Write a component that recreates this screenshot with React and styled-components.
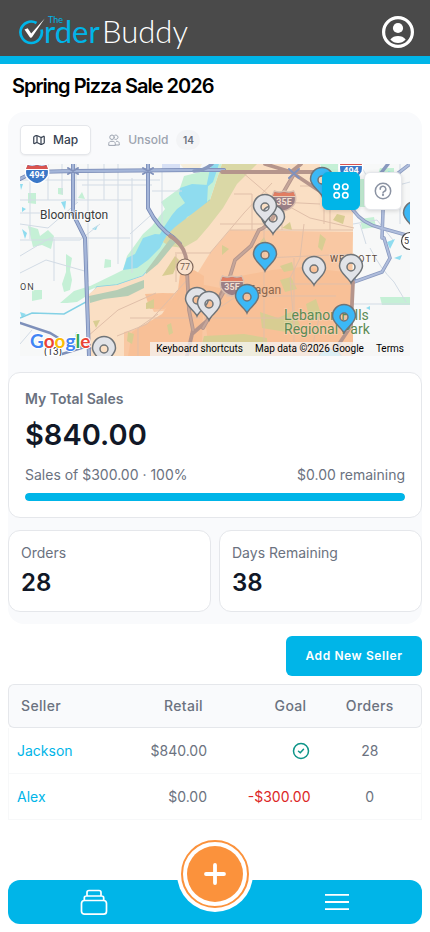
import React from "react";
import styled, { createGlobalStyle } from "styled-components";

const sellers = [
  { name: "Jackson", retail: "$840.00", goal: null, orders: 28 },
  { name: "Alex", retail: "$0.00", goal: "-$300.00", orders: 0 },
];

const pins = [
  { x: 395, y: 50, sold: true },
  { x: 302, y: 16, sold: true },
  { x: 253, y: 54 },
  { x: 245, y: 43 },
  { x: 245, y: 91, sold: true },
  { x: 294, y: 105 },
  { x: 331, y: 103 },
  { x: 177, y: 136 },
  { x: 189, y: 140 },
  { x: 227, y: 133, sold: true },
  { x: 324, y: 153, sold: true },
  { x: 84, y: 185 },
];

const App = () => {
  return (
    <>
      <GlobalStyle />
      <Page>
        <Header>
          <Logo />
          <ProfileButton type="button" aria-label="Profile">
            <ProfileIcon />
          </ProfileButton>
        </Header>
        <Main>
          <Title>Spring Pizza Sale 2026</Title>
          <Panel>
            <MapSection>
              <Tabs>
                <Tab type="button" $active>
                  <MapIcon />
                  Map
                </Tab>
                <Tab type="button">
                  <GroupIcon />
                  Unsold
                  <Badge>14</Badge>
                </Tab>
              </Tabs>
              <MapBox>
                <MapDrawing />
                <MapTools>
                  <ToolButton type="button" $primary aria-label="Layers">
                    <GridIcon />
                  </ToolButton>
                  <ToolButton type="button" aria-label="Help">
                    <HelpIcon />
                  </ToolButton>
                </MapTools>
                <MapFooter>
                  <MapCredit as="button" type="button">
                    Keyboard shortcuts
                  </MapCredit>
                  <MapCredit>Map data ©2026 Google</MapCredit>
                  <MapCredit as="a" href="#terms">
                    Terms
                  </MapCredit>
                </MapFooter>
              </MapBox>
            </MapSection>
            <SalesCard>
              <SalesLabel>My Total Sales</SalesLabel>
              <SalesTotal>$840.00</SalesTotal>
              <SalesRow>
                <span>Sales of $300.00 · 100%</span>
                <span>$0.00 remaining</span>
              </SalesRow>
              <Progress>
                <ProgressFill style={{ width: "100%" }} />
              </Progress>
            </SalesCard>
            <Stats>
              <Stat>
                <StatLabel>Orders</StatLabel>
                <StatValue>28</StatValue>
              </Stat>
              <Stat>
                <StatLabel>Days Remaining</StatLabel>
                <StatValue>38</StatValue>
              </Stat>
            </Stats>
          </Panel>
          <Actions>
            <AddButton type="button">Add New Seller</AddButton>
          </Actions>
          <Table>
            <thead>
              <tr>
                <Th>Seller</Th>
                <Th $align="right">Retail</Th>
                <Th $align="right">Goal</Th>
                <Th $align="center">Orders</Th>
              </tr>
            </thead>
            <tbody>
              {sellers.map((seller) => (
                <tr key={seller.name}>
                  <Td>
                    <SellerLink href="#seller">{seller.name}</SellerLink>
                  </Td>
                  <Td $align="right">{seller.retail}</Td>
                  <Td $align="right" $negative={!!seller.goal}>
                    {seller.goal || <DoneIcon />}
                  </Td>
                  <Td $align="center">{seller.orders}</Td>
                </tr>
              ))}
            </tbody>
          </Table>
        </Main>
        <BottomNav>
          <NavButton type="button" aria-label="Sales">
            <StackIcon />
          </NavButton>
          <AddSlot>
            <Fab type="button" aria-label="New order">
              <FabCore>
                <PlusIcon />
              </FabCore>
            </Fab>
          </AddSlot>
          <NavButton type="button" aria-label="Menu">
            <MenuIcon />
          </NavButton>
        </BottomNav>
      </Page>
    </>
  );
};

export default App;

const Logo = () => (
  <svg width="176" height="44" viewBox="0 0 176 44" role="img" aria-label="The Order Buddy">
    <path d="M18.500 17A10.700 10.700 0 1 0 23.500 23.500" fill="none" stroke="#00b5e8" strokeWidth="2.700" />
    <path d="M6.500 23.500l3.200-1.300 3.500 5.300L26.700 12.500 13.800 31.500l-1.600.2z" fill="#fff" />
    <g fontFamily="Lato, sans-serif">
      <text x="30" y="17" fontSize="9" fill="#00b5e8">
        The
      </text>
      <text x="26" y="37" fontSize="31" fill="#00b5e8">
        rder
      </text>
      <text x="84" y="37" fontSize="31" fontWeight="300" fill="#fff">
        Buddy
      </text>
    </g>
  </svg>
);

const ProfileIcon = () => (
  <svg width="32" height="32" viewBox="0 0 32 32">
    <circle cx="16" cy="16" r="14.400" fill="none" stroke="#fff" strokeWidth="3.200" />
    <circle cx="16" cy="12" r="5.100" fill="#fff" />
    <path d="M8.300 23.500C10 21 13 20 16 20s6 1 7.700 3.500C21.500 26 19 27 16 27s-5.500-1-7.700-3.500z" fill="#fff" />
  </svg>
);

const MapIcon = () => (
  <svg width="12" height="12" viewBox="0 0 24 24" fill="none" stroke="currentColor" strokeWidth="2.400" strokeLinejoin="round">
    <path d="M1.500 6.500Q1.500 5 3 4.400L6 3.200Q7.500 2.600 9 3.500l6 3Q16.500 7 18 6.300l2.500-1.500Q22.500 4 22.500 6v11q0 1.500-1.500 2l-3 1.500q-1.500.7-3 0l-6-3q-1.500-.7-3 0L3.500 19Q1.500 19.800 1.500 18z" />
    <path d="M8 3.500v14M16 7v13.500" />
  </svg>
);

const GroupIcon = () => (
  <svg width="12" height="12" viewBox="0 0 24 24" fill="none" stroke="currentColor" strokeWidth="2" strokeLinecap="round">
    <circle cx="8" cy="6.500" r="4.500" />
    <path d="M13.500 2.500a4.500 4.500 0 1 1 0 8" />
    <path d="M1.500 22v-3c0-3 2.500-4.500 6.500-4.500s6.500 1.500 6.500 4.500v3zM17 14.500c3.500 0 5.500 1.500 5.500 4.500v3H15" />
  </svg>
);

const GridIcon = () => (
  <svg width="16" height="16" viewBox="0 0 16 16" fill="none" stroke="currentColor" strokeWidth="1.600">
    <circle cx="3.700" cy="3.700" r="2.700" />
    <circle cx="12.300" cy="3.700" r="2.700" />
    <circle cx="3.700" cy="12.300" r="2.700" />
    <circle cx="12.300" cy="12.300" r="2.700" />
  </svg>
);

const HelpIcon = () => (
  <svg width="18" height="18" viewBox="0 0 18 18" fill="none" stroke="currentColor" strokeWidth="1.500" strokeLinecap="round">
    <circle cx="9" cy="9" r="7.700" />
    <path d="M6.200 7.300A2.800 2.800 0 1 1 9.800 9.700C9.200 9.900 9 10.200 9 11" />
    <circle cx="9" cy="13" r=".4" />
  </svg>
);

const DoneIcon = () => (
  <DoneSvg width="20" height="20" viewBox="0 0 20 20" role="img" aria-label="Goal met">
    <circle cx="10" cy="10" r="7.500" />
    <path d="M7.500 10.200l1.800 1.600 3.200-3.500" />
  </DoneSvg>
);

const StackIcon = () => (
  <svg width="28" height="28" viewBox="0 0 28 28" fill="none" stroke="currentColor" strokeWidth="1.700" strokeLinejoin="round">
    <rect x="1.500" y="12.500" width="25" height="13.700" rx="3" />
    <path d="M4.300 12.500V10q0-2 2-2h15.400q2 0 2 2v2.500M7 8V4.500q0-2 2-2h10q2 0 2 2V8" />
  </svg>
);

const MenuIcon = () => (
  <svg width="24" height="18" viewBox="0 0 24 18" stroke="currentColor" strokeWidth="1.800">
    <path d="M0 1.800h24M0 9h24M0 16.200h24" />
  </svg>
);

const PlusIcon = () => (
  <svg width="22" height="22" viewBox="0 0 22 22" stroke="#fff" strokeWidth="3.800" strokeLinecap="round">
    <path d="M2 11h18M11 2v18" />
  </svg>
);

const Pin = ({ x, y, sold }) => (
  <g transform={`translate(${x} ${y})`}>
    <path
      d="M0 16C-2 11-11.500 6-11.500-1A11.500 11.500 0 0 1 11.500-1C11.500 6 2 11 0 16zM0-4a4 4 0 1 0 0 8a4 4 0 1 0 0-8z"
      fill={sold ? "#3bb8f6" : "#e1e3e8"}
      fillRule="evenodd"
      stroke="#6f7478"
      strokeWidth="1.500"
    />
  </g>
);

const Shield = ({ x, y, label, faded }) => (
  <g transform={`translate(${x} ${y})`}>
    <path
      d="M-9.500-9Q-5-7 0-9Q5-7 9.500-9Q13-3 11 3Q8 9 0 11Q-8 9-11 3Q-13-3-9.500-9z"
      fill={faded ? "#9a7f86" : "#3b78c8"}
      stroke={faded ? "#d9bfae" : "#fff"}
      strokeWidth="1.500"
    />
    <path d="M-9.500-8Q-5-6 0-8Q5-6 9.500-8L11-4H-11z" fill={faded ? "#e17d62" : "#d9534f"} />
    <path d="M-11.500-3.500h23" stroke={faded ? "#e8cfbd" : "#fff"} />
    <text y="5" textAnchor="middle" fontSize="9" fontWeight="700" fill={faded ? "#f3ded0" : "#fff"}>
      {label}
    </text>
  </g>
);

const MapDrawing = () => (
  <MapSvg viewBox="0 0 390 192" preserveAspectRatio="xMidYMid slice" role="img" aria-label="Sales map">
    <rect width="390" height="192" fill="#f7f8f8" />
    {/* parks */}
    <g fill="#c5f0d6">
      <path d="M180 8l20-8 2 0-12 36-25 27-8 8-14 17-20 23-26 10-20 2-17 7 2-4 33-16 8-4 4-14 16-22 9-8 13-17-4-7 19-14 4-12z" />
      <path d="M40 139l14-12 16-5-2 9-11 7-10 1zM46 90l6 4-2 12 2 10-2 10-6 2-2-8 4-12zM8 62l10 3 2 7 8-6 6 6-3 13-9-4-9 2zM85 95l6 1v7l-7 1zM12 126h10v9l-10 2zM8 29h8v11l-8-1zM38 24h5v7l-5-1zM58 34l4-6 3 7zM300 0h18v12h-14zM334 15h18v28h-12zM360 4h14v12h-18zM340 55l14-2 2 10-14 2zM360 133h30v8h-28z" />
    </g>
    <path d="M142 0h18v5h-18z" fill="#d7e0f5" />
    <path d="M160 0h22l-4 8-14-3z" fill="#f6eedb" />
    {/* water */}
    <g fill="#8fdcef">
      <path d="M160 24l12-4 16 1-1 18-7 8-13 6-4 10-15 12-12 2 8-14 8-12 5-6 8-6-6-9z" />
      <path d="M103 106l4-12 8-4 8-16 12-4 12 1-7 13-12 12-11 8z" />
      <path d="M191 0h8l-6 18-7 6zM41 38l5-1-1 9zM0 20h3l-2 6zM2 43l4 2-4 3zM72 65l6-4-2 5zM2 65l5 4-2 6zM368 7l12 4-8 5zM367 78l8-3-5 10zM374 94l8-3-2 5zM350 30l5 8-7 2zM346 144l4-2v4zM56 168l3 3-4 2zM0 148l6 2-4 4z" />
    </g>
    <path d="M0 154l12-5 32 1 22-12 11-15 20-2 26-9 20-23 22-26 25-27" fill="none" stroke="#83d1e5" strokeWidth="1.500" />
    {/* local streets */}
    <g fill="none" stroke="#d2dbe5" strokeWidth="1">
      <path d="M0 16h140M0 36h112M0 49h20M62 21h70M10 0v75M28 0v36M68 0v118M98 0v100M84 0v36M112 14v95M34 75v42M0 92l30-18h80M0 109l26-13 42 12M132 27h30M142 4v58M0 60l28 4 30-26M42 0v30M56 0v40M110 70l20-18M0 76h60l20-16" />
      <path d="M333 60l24-4 16 20M333 140h57M350 84q10 20 24 34l12 20M340 0l10 18M360 26l30-8M380 0v60M340 60l6 20M0 180l12-14" />
    </g>
    {/* territory */}
    <path d="M202 0h98v8h33v184H68v-61l9-8 20-2 26-9 20-23 14-17 8-8 25-27z" fill="#fadfc4" />
    <path d="M333 68l-123-2-20 23-13 21-20 19-7 0-16 1-4 10 4 8 16-2-10 9-27 11-9 2v28h225z" fill="#f9c8a3" />
    <path d="M125 130l18-1 11 1-6 12-4 3-14 0zM160 110l14-4 10 6-2 70-24 10h-50l4-24 30-18 16-24zM180 120l20 4 20-12 32-6 30-3 51 6v83H190z" fill="#f8c097" />
    <path d="M190 36L202 0h35l-20 20-14 24-14 18-12 14-14 8-14-2-6-4 4-7 8-8z" fill="#dad8a6" />
    <g fill="#d8cd92">
      <path d="M126 139l8-4v9l-8 1zM73 157l7-1-4 8zM147 161l4-2 2 10-4 2zM262 64l8-6 2 8zM240 78l4-5 4 9-5 3zM260 116l11-3 6 12-12 3zM240 148l18 6 15-7 7 14-14 7-24-4zM184 172l40-2 23 4v18h-68zM286 140l10-5 6 18-12 4zM317 50l8 2-2 8-10-4zM142 112l13-20 4 4-6 14zM202 81l7 4-7 6zM260 102l12-4 2 8-10 2zM300 70l6 5-4 12-4-4zM108 168l6 2-2 10-5-3z" />
    </g>
    <path d="M69 132l28-6 27-10v8l-16 8-24 3-14 4zM126 107l24-32 6 3-18 22-12 10z" fill="#b5cdb5" />
    {/* local streets inside the territory */}
    <g fill="none" stroke="#e0bfa9" strokeWidth="1">
      <path d="M68 172l30-26 38-17M97 172l30-12 20-22 20-22M110 154h70M157 89h34M244 60v132M210 66h123M190 89l34-40 28-30M270 120h63M274 94v98M222 8l28 24 40 22 44 10M284 60l-4 34-10 20 4 46M200 60h44M310 30v36M190 150l30-20M156 88v30M300 150l-10 42M214 30h18v36M262 40v26M280 22h24v38" />
      <path d="M118 192v-28l20-14M244 94l90-4M184 154h149M206 132h110M300 40l-40-2" />
    </g>
    {/* highways */}
    <g fill="none" strokeLinecap="round">
      <path d="M0 15l14-7 40-1 120-1h30M53 0v50l12 24 2 60 2 58M128 0v44q10 20 26 30l6 6" stroke="#7688b4" strokeWidth="4" />
      <path d="M0 15l14-7 40-1 120-1h30M53 0v50l12 24 2 60 2 58M128 0v44q10 20 26 30l6 6" stroke="#a4b5d8" strokeWidth="2.500" />
      <path d="M174 7q10 0 18-7M333 46q10 14 28 18l29 8M390 0l-26 20-2 54M364 74l6 20-8 14-28 10v-4M354 18l14-18" stroke="#8999bf" strokeWidth="3.500" />
      <path d="M333 46q10 14 28 18l29 8M390 0l-26 20-2 54M364 74l6 20-8 14-28 10" stroke="#afbddc" strokeWidth="2" />
      <path d="M202 8l100 0M274 10l30 20M245 0l26 8 10-8M274 10l-15 26q-4 24-20 30l-8 16-16 14-8 26-24 42M150 72q18 10 17 34l2 40 4 20-6 26M172 170l16-14 19-38M333 118l-2 44-20 30" stroke="#b5958c" strokeWidth="3.800" />
      <path d="M274 10l-15 26q-4 24-20 30l-8 16-16 14-8 26-24 42M167 112l2 34 4 20" stroke="#c5a69a" strokeWidth="2" />
      <path d="M48 4l10 6M48 10l10-6M123 4l10 6M123 10l10-6M269 5l10 9M269 14l10-9" stroke="#8091bb" strokeWidth="2" />
      <path d="M0 159l30 10 20 12 20 3M42 190l26-8" stroke="#7e90ba" strokeWidth="2.500" />
    </g>
    {/* places */}
    <g fontFamily="Roboto, sans-serif" stroke="#fff" strokeOpacity=".6" strokeWidth="2" paintOrder="stroke">
      <text x="20" y="55" fontSize="12" fill="#3c3c3c">
        Bloomington
      </text>
      <text x="0" y="126" fontSize="9" letterSpacing="1" fill="#444">
        ON
      </text>
      <text x="228" y="130" fontSize="12" fill="#8b674f" strokeOpacity="0">
        Eagan
      </text>
      <text x="310" y="98" fontSize="9" letterSpacing="1" fill="#59483d" strokeOpacity=".2">
        WESCOTT
      </text>
      <text fontSize="14" fill="#5c8b55" strokeOpacity=".2">
        <tspan x="264" y="156">
          Lebanon Hills
        </tspan>
        <tspan x="264" y="170">
          Regional Park
        </tspan>
      </text>
    </g>
    <g fontFamily="Roboto, sans-serif">
      <circle cx="165" cy="103" r="8" fill="#fae3ce" stroke="#7f685b" strokeWidth="1.200" />
      <text x="165" y="106" textAnchor="middle" fontSize="9" fill="#745d50">
        77
      </text>
      <circle cx="390" cy="77" r="8.500" fill="#fff" stroke="#444" strokeWidth="1.200" />
      <text x="384" y="80" fontSize="9" fill="#333">
        5
      </text>
      <rect x="24" y="181" width="18" height="14" rx="6" fill="#fff" />
      <text x="33" y="191" textAnchor="middle" fontSize="10" fill="#333">
        (13)
      </text>
      <Shield x={17} y={9} label="494" />
      <Shield x={331} y={5} label="494" />
      <Shield x={264} y={36} label="35E" faded />
      <Shield x={212} y={121} label="35E" faded />
    </g>
    {pins.map((pin) => (
      <Pin key={`${pin.x}-${pin.y}`} {...pin} />
    ))}
    <circle cx="310" cy="198" r="13" fill="#8fd6ee" stroke="#b99b8c" />
    <text x="10" y="184" fontFamily="Lato, sans-serif" fontSize="19" fontWeight="700" stroke="#fff" strokeWidth="2" paintOrder="stroke">
      <tspan fill="#4285f4">G</tspan>
      <tspan fill="#ea4335">o</tspan>
      <tspan fill="#fbbc05">o</tspan>
      <tspan fill="#4285f4">g</tspan>
      <tspan fill="#34a853">l</tspan>
      <tspan fill="#ea4335">e</tspan>
    </text>
  </MapSvg>
);

const GlobalStyle = createGlobalStyle`
  * {
    box-sizing: border-box;
  }
  body {
    margin: 0;
    background: #fff;
    color: #6b7280;
    font-family: Inter, sans-serif;
    font-size: 14px;
    line-height: 20px;
  }
  button {
    margin: 0;
    padding: 0;
    border: 0;
    background: none;
    color: inherit;
    font: inherit;
    cursor: pointer;
  }
  svg {
    display: block;
  }
`;

const Page = styled.div`
  display: flex;
  flex-direction: column;
  min-height: 100vh;
`;

const Header = styled.header`
  display: flex;
  align-items: center;
  justify-content: space-between;
  height: 64px;
  padding: 0 16px 0 18px;
  background: #4a4a4a;
  border-bottom: 8px solid #00b5e8;
`;

const ProfileButton = styled.button`
  margin-top: 8px;
`;

const Main = styled.main`
  padding: 8px 8px 0;
`;

const Title = styled.h1`
  margin: 0 4px 12px;
  color: #000;
  font-size: 20px;
  font-weight: 600;
  line-height: 28px;
  letter-spacing: -0.05em;
`;

const Panel = styled.section`
  display: flex;
  flex-direction: column;
  gap: 12px;
  padding-bottom: 12px;
  border-radius: 16px;
  background: #f9fafc;
`;

const MapSection = styled.div`
  padding: 12px 12px 4px;
`;

const Tabs = styled.div`
  display: flex;
  align-items: center;
  gap: 4px;
  height: 32px;
  margin-bottom: 8px;
`;

const Tab = styled.button`
  display: flex;
  align-items: center;
  gap: 8px;
  height: 30px;
  padding: 0 12px;
  border: 1px solid ${({ $active }) => ($active ? "#e5e7eb" : "transparent")};
  border-radius: 5px;
  background: ${({ $active }) => ($active ? "#fff" : "transparent")};
  box-shadow: ${({ $active }) => ($active ? "0 1px 2px rgba(0, 0, 0, 0.06)" : "none")};
  color: ${({ $active }) => ($active ? "#374151" : "#9ca3af")};
  font-size: 12px;
  font-weight: 500;
`;

const Badge = styled.span`
  min-width: 24px;
  border-radius: 10px;
  background: #f3f4f6;
  color: #6b7280;
  font-size: 10px;
  font-weight: 600;
  text-align: center;
`;

const MapBox = styled.div`
  position: relative;
  height: 192px;
  overflow: hidden;
`;

const MapSvg = styled.svg`
  width: 100%;
  height: 100%;
`;

const MapTools = styled.div`
  position: absolute;
  top: 8px;
  right: 8px;
  display: flex;
  gap: 4px;
`;

const ToolButton = styled.button`
  display: flex;
  align-items: center;
  justify-content: center;
  width: 38px;
  height: 38px;
  border: 1px solid ${({ $primary }) => ($primary ? "#00b5e8" : "#e5e7eb")};
  border-radius: 6px;
  background: ${({ $primary }) => ($primary ? "#00b5e8" : "#fff")};
  box-shadow: 0 1px 4px rgba(0, 0, 0, 0.15);
  color: ${({ $primary }) => ($primary ? "#fff" : "#8b93a3")};
`;

const MapFooter = styled.div`
  position: absolute;
  right: 0;
  bottom: 0;
  display: flex;
  background: rgba(245, 245, 245, 0.75);
`;

const MapCredit = styled.span`
  padding: 0 6px;
  color: #000;
  font-family: Roboto, sans-serif;
  font-size: 10px;
  line-height: 14px;
  text-decoration: none;
`;

const SalesCard = styled.div`
  padding: 16px;
  border: 1px solid #e5e7eb;
  border-radius: 12px;
  background: #fff;
`;

const SalesLabel = styled.h2`
  margin: 0 0 8px;
  font-size: 14px;
  font-weight: 600;
  line-height: 20px;
`;

const SalesTotal = styled.p`
  margin: 0 0 12px;
  color: #111827;
  font-size: 29px;
  font-weight: 600;
  line-height: 36px;
`;

const SalesRow = styled.div`
  display: flex;
  justify-content: space-between;
  margin-bottom: 8px;
`;

const Progress = styled.div`
  height: 8px;
  overflow: hidden;
  border-radius: 4px;
  background: #e5e7eb;
`;

const ProgressFill = styled.div`
  height: 100%;
  border-radius: 4px;
  background: #00b5e8;
`;

const Stats = styled.div`
  display: grid;
  grid-template-columns: 1fr 1fr;
  gap: 8px;
`;

const Stat = styled.div`
  padding: 12px;
  border: 1px solid #e5e7eb;
  border-radius: 12px;
  background: #fff;
`;

const StatLabel = styled.p`
  margin: 0 0 4px;
`;

const StatValue = styled.p`
  margin: 0;
  color: #111827;
  font-size: 24px;
  font-weight: 600;
  line-height: 32px;
`;

const Actions = styled.div`
  display: flex;
  justify-content: flex-end;
  padding: 12px 0 8px;
`;

const AddButton = styled.button`
  width: 136px;
  height: 40px;
  border-radius: 6px;
  background: #00b5e8;
  color: #fff;
  font-size: 12px;
  font-weight: 600;
  letter-spacing: 0.05em;
`;

const Table = styled.table`
  width: 100%;
  table-layout: fixed;
  border-collapse: separate;
  border-spacing: 0;
`;

const Th = styled.th`
  height: 44px;
  padding: 0 12px;
  border: solid #e5e7eb;
  border-width: 1px 0;
  background: #f9fafc;
  font-weight: 500;
  letter-spacing: 0.025em;
  text-align: ${({ $align }) => $align || "left"};
  &:first-child {
    border-left-width: 1px;
    border-radius: 6px 0 0 6px;
  }
  &:last-child {
    border-right-width: 1px;
    border-radius: 0 6px 6px 0;
  }
`;

const Td = styled.td`
  height: 46px;
  padding: 0 8px;
  border-bottom: 1px solid #f7f8f9;
  color: ${({ $negative }) => ($negative ? "#dc2626" : "#6b7280")};
  text-align: ${({ $align }) => $align || "left"};
  &:first-child {
    border-left: 1px solid #f7f8f9;
  }
  &:last-child {
    border-right: 1px solid #f7f8f9;
  }
`;

const SellerLink = styled.a`
  color: #00b5e8;
  text-decoration: none;
`;

const DoneSvg = styled.svg`
  display: inline-block;
  vertical-align: middle;
  fill: none;
  stroke: #0d9488;
  stroke-width: 1.5;
  stroke-linecap: round;
`;

const BottomNav = styled.nav`
  position: sticky;
  bottom: 8px;
  display: grid;
  grid-template-columns: 1fr 72px 1fr;
  align-items: center;
  height: 44px;
  margin: auto 8px 8px;
  border-radius: 12px;
  background: #00b5e8;
  color: #fff;
`;

const NavButton = styled.button`
  display: flex;
  align-items: center;
  justify-content: center;
  height: 44px;
`;

const AddSlot = styled.div`
  position: relative;
  height: 44px;
`;

const Fab = styled.button`
  position: absolute;
  top: -40px;
  left: 2px;
  display: flex;
  align-items: center;
  justify-content: center;
  width: 68px;
  height: 68px;
  border: 2px solid #fb923c;
  border-radius: 50%;
  background: #fff;
  box-shadow: 0 0 0 4px #fff;
`;

const FabCore = styled.span`
  display: flex;
  align-items: center;
  justify-content: center;
  width: 56px;
  height: 56px;
  border-radius: 50%;
  background: #fb923c;
`;
